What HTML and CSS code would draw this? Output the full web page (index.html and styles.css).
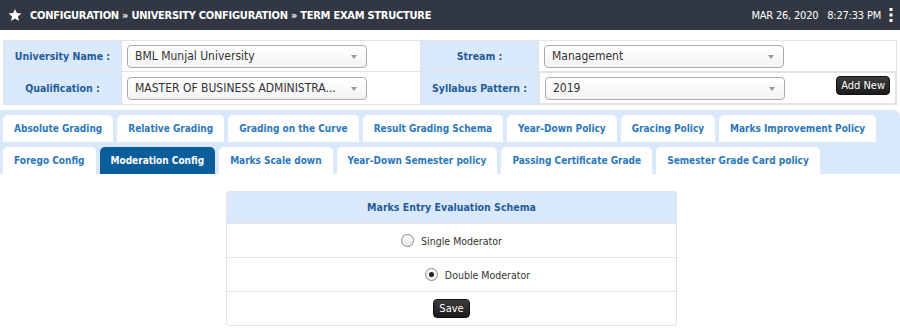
FILE: index.html
```html
<!DOCTYPE html>
<html>
<head>
  <link rel="stylesheet" href="styles.css">
</head>
<body>
  <div class="topbar">
    <div class="crumbs">
      <svg class="star" width="14" height="14" viewBox="0 0 24 24"><path d="M12 1.5l3.1 7.2 7.9.7-6 5.2 1.8 7.7L12 18.2l-6.8 4.1 1.8-7.7-6-5.2 7.9-.7z" fill="#fff"/></svg>
      <span>CONFIGURATION &raquo; UNIVERSITY CONFIGURATION &raquo; TERM EXAM STRUCTURE</span>
    </div>
    <div class="clock">
      <span>MAR 26, 2020&nbsp;&nbsp; 8:27:33 PM</span>
      <svg class="dots" width="4" height="14" viewBox="0 0 4 14"><rect x="0.5" y="0" width="3" height="3" fill="#fff"/><rect x="0.5" y="5.5" width="3" height="3" fill="#fff"/><rect x="0.5" y="11" width="3" height="3" fill="#fff"/></svg>
    </div>
  </div>

  <table class="filters">
    <tr>
      <td class="lbl">University Name :</td>
      <td class="fld"><div class="select">BML Munjal University</div></td>
      <td class="lbl">Stream :</td>
      <td class="fld"><div class="select">Management</div></td>
    </tr>
    <tr>
      <td class="lbl">Qualification :</td>
      <td class="fld"><div class="select">MASTER OF BUSINESS ADMINISTRA...</div></td>
      <td class="lbl">Syllabus Pattern :</td>
      <td class="fld last"><div class="select">2019</div><button class="btn add">Add New</button></td>
    </tr>
  </table>

  <div class="tabs">
    <div class="tabrow">
      <div class="tab">Absolute Grading</div>
      <div class="tab">Relative Grading</div>
      <div class="tab">Grading on the Curve</div>
      <div class="tab">Result Grading Schema</div>
      <div class="tab">Year-Down Policy</div>
      <div class="tab">Gracing Policy</div>
      <div class="tab">Marks Improvement Policy</div>
    </div>
    <div class="tabrow">
      <div class="tab">Forego Config</div>
      <div class="tab active">Moderation Config</div>
      <div class="tab">Marks Scale down</div>
      <div class="tab">Year-Down Semester policy</div>
      <div class="tab">Passing Certificate Grade</div>
      <div class="tab">Semester Grade Card policy</div>
    </div>
  </div>

  <div class="panel">
    <div class="panel-head">Marks Entry Evaluation Schema</div>
    <div class="panel-row"><label class="opt"><span class="radio"></span>Single Moderator</label></div>
    <div class="panel-row shift"><label class="opt"><span class="radio on"></span>Double Moderator</label></div>
    <div class="panel-row"><button class="btn">Save</button></div>
  </div>
</body>
</html>
```

FILE: styles.css
```css
:root {
  --bar: #323843;
  --blue-bg: #dae8fc;
  --label: #1f5c99;
  --tab-text: #2a78bd;
  --active: #0c5d9c;
  --line: #e3e3e3;
}

body {
  margin: 0;
  font-family: "DejaVu Sans Condensed", "DejaVu Sans", sans-serif;
  font-size: 12px;
  color: #333;
  background: #fff;
}

.topbar {
  height: 30px;
  background: var(--bar);
  color: #fff;
  display: flex;
  align-items: center;
  justify-content: space-between;
  padding: 0 7px 0 8px;
}

.crumbs {
  display: flex;
  align-items: center;
  gap: 8px;
  font-weight: bold;
  font-size: 11px;
  letter-spacing: -0.25px;
}

.clock {
  display: flex;
  align-items: center;
  gap: 8px;
  font-size: 11px;
  letter-spacing: -0.2px;
}

.filters {
  margin: 10px 3px 0;
  width: calc(100% - 6px);
  border-collapse: collapse;
  border: 1px solid var(--line);
}

.filters td {
  border: 1px solid var(--line);
  height: 30px;
  padding: 0;
}

.lbl {
  background: var(--blue-bg);
  color: var(--label);
  font-weight: bold;
  font-size: 10.5px;
  text-align: center;
  width: 117px;
}

.fld {
  padding: 0 5px !important;
}

.fld:nth-child(2) {
  width: 288px;
}

.select {
  width: 224px;
  height: 21px;
  border: 1px solid #ababab;
  border-radius: 4px;
  background: linear-gradient(#fff, #f3f3f3);
  padding: 0 7px;
  line-height: 21px;
  font-size: 12px;
  color: #333;
  position: relative;
}

.select::after {
  content: "";
  position: absolute;
  right: 9px;
  top: 9px;
  border-left: 3px solid transparent;
  border-right: 3px solid transparent;
  border-top: 4px solid #999;
}

.last {
  display: flex;
  align-items: center;
  justify-content: space-between;
}

.btn {
  background: linear-gradient(#3c3c3c, #1c1c1c);
  color: #fff;
  border: 1px solid #111;
  border-radius: 4px;
  font-family: inherit;
  font-size: 11px;
  padding: 2px 5px;
  height: 19px;
  line-height: 13px;
}

.add {
  margin-top: -6px;
  margin-right: 0;
  padding: 2px 4px;
}

.tabs {
  margin-top: 5px;
  background: var(--blue-bg);
  border-top-right-radius: 6px;
  padding: 5px 0 0 3px;
  display: flex;
  flex-direction: column;
  gap: 5px;
}

.tabrow {
  display: flex;
  gap: 4px;
}

.tab {
  background: #fff;
  color: var(--tab-text);
  font-weight: bold;
  font-size: 10px;
  white-space: nowrap;
  height: 27px;
  line-height: 28px;
  padding: 0 11px;
  border-radius: 5px 5px 0 0;
}

.tab.active {
  background: var(--active);
  color: #fff;
}

.panel {
  width: 449px;
  margin: 17px 0 0 226px;
  border: 1px solid var(--line);
  border-radius: 3px;
  overflow: hidden;
}

.panel-head {
  background: var(--blue-bg);
  color: var(--label);
  font-weight: bold;
  font-size: 10.5px;
  text-align: center;
  height: 31px;
  line-height: 31px;
}

.panel-row {
  height: 33px;
  border-top: 1px solid var(--line);
  display: flex;
  align-items: center;
  justify-content: center;
}

.panel-row.shift {
  padding-left: 52px;
}

.opt {
  display: flex;
  align-items: center;
  gap: 7px;
  font-size: 10.5px;
  color: #333;
}

.radio {
  width: 11px;
  height: 11px;
  border: 1px solid #888;
  border-radius: 50%;
  background: linear-gradient(#fff, #e8e8e8);
  position: relative;
}

.radio.on::after {
  content: "";
  position: absolute;
  left: 3px;
  top: 3px;
  width: 5px;
  height: 5px;
  border-radius: 50%;
  background: #222;
}
```
